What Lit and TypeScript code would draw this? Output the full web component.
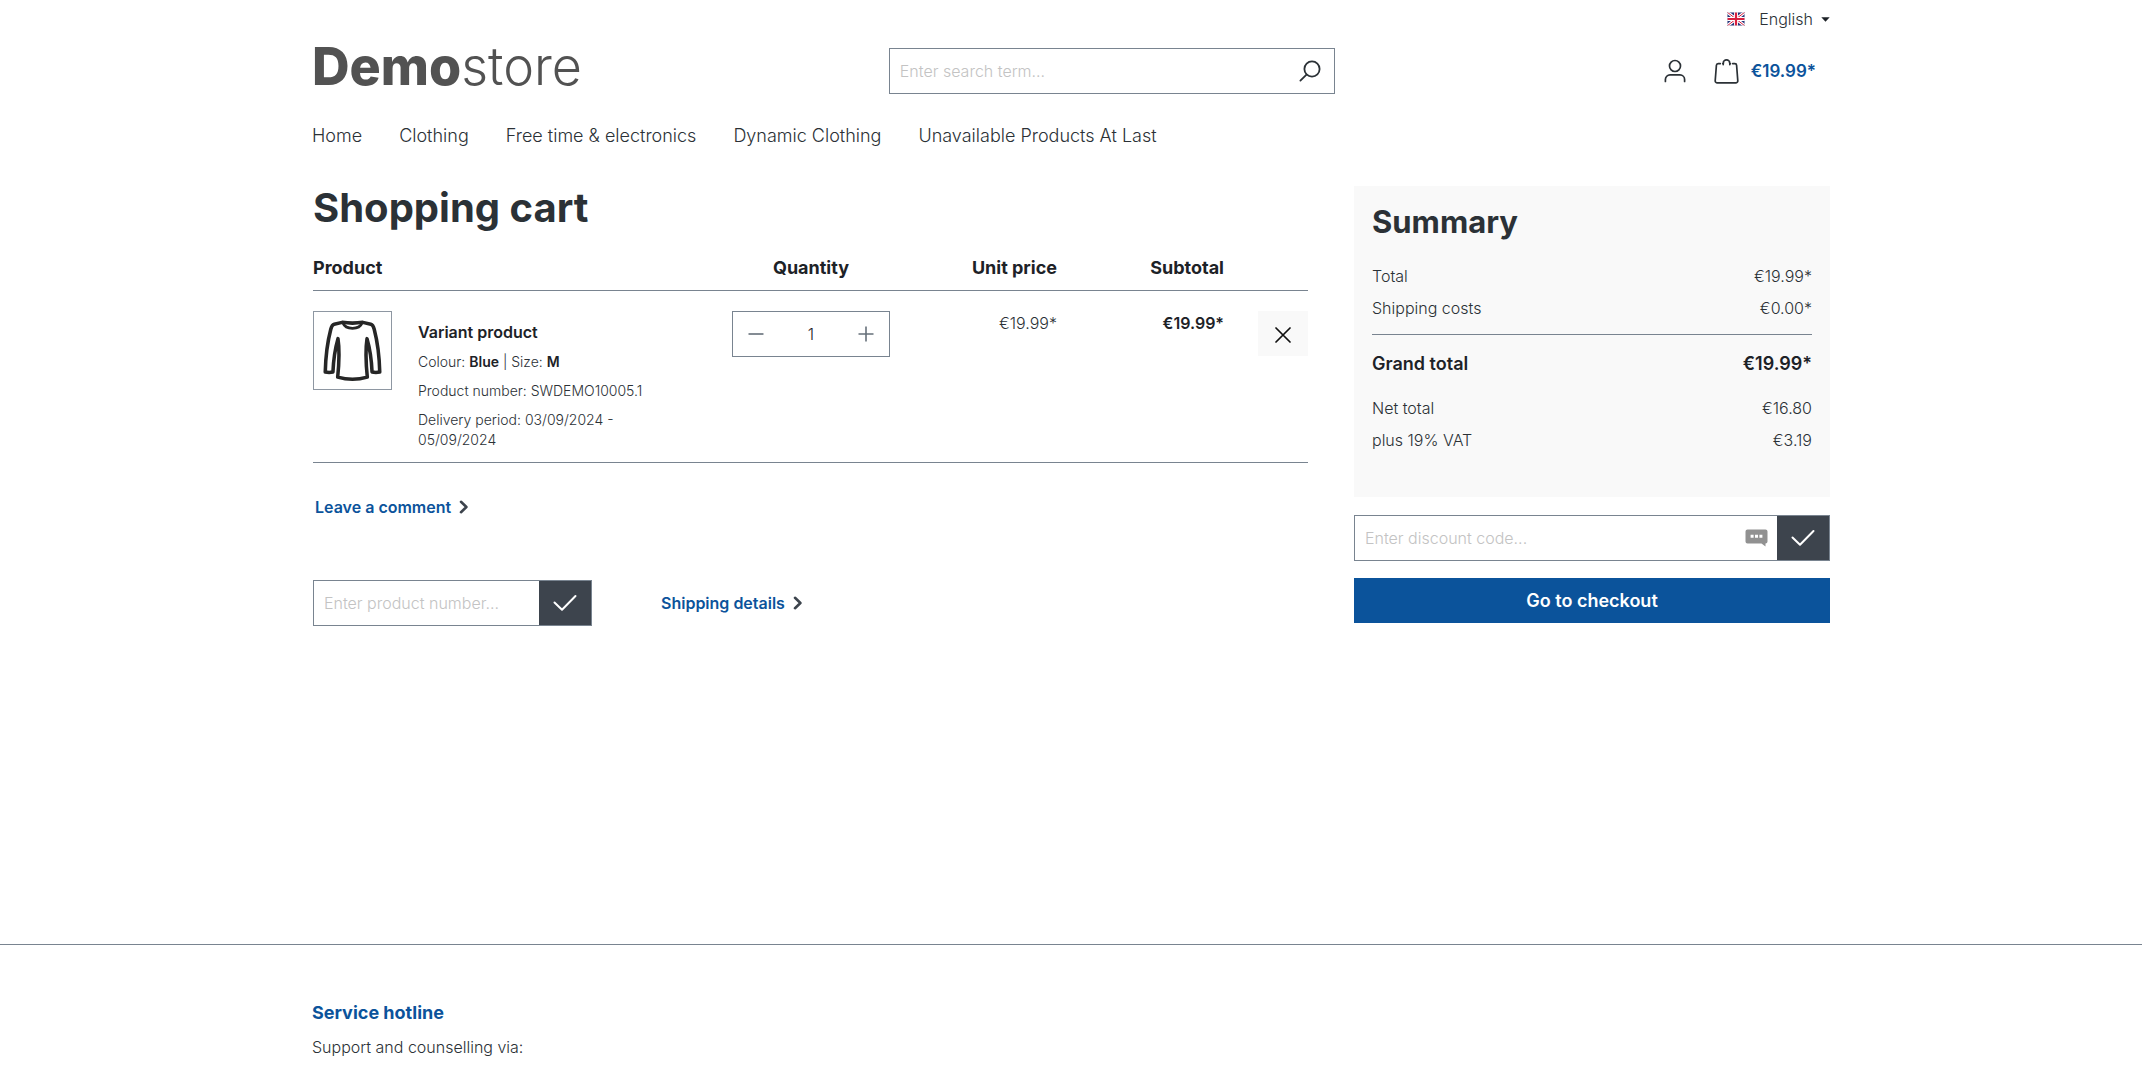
import { LitElement, html, css, svg } from "lit";
import { customElement, state } from "lit/decorators.js";

const checkIcon = svg`<svg class="icon" width="24" height="18" viewBox="0 0 24 18" aria-hidden="true"><path d="M1.5 8.5 9 15.8 22.5 2" fill="none" stroke="#fff" stroke-width="2" stroke-linecap="round" stroke-linejoin="round"/></svg>`;
const arrowIcon = svg`<svg class="icon" width="10" height="14" viewBox="0 0 10 14" aria-hidden="true"><path d="M2 1.8 7.4 7 2 12.2" fill="none" stroke="#3d444d" stroke-width="2.6" stroke-linecap="round" stroke-linejoin="round"/></svg>`;

interface Item {
  name: string;
  colour: string;
  size: string;
  number: string;
  delivery: string;
  price: string;
}

@customElement("app-root")
export class AppRoot extends LitElement {
  @state() private quantity = 1;

  private links = ["Home", "Clothing", "Free time & electronics", "Dynamic Clothing", "Unavailable Products At Last"];

  private items: Item[] = [
    {
      name: "Variant product",
      colour: "Blue",
      size: "M",
      number: "SWDEMO10005.1",
      delivery: "03/09/2024 - 05/09/2024",
      price: "€19.99*",
    },
  ];

  static styles = css`
    :host {
      display: block;
      min-height: 100vh;
      background: #fff;
      color: #2b3136;
      font-family: Inter, "Liberation Sans", sans-serif;
      font-size: 16px;
      font-weight: 300;
      line-height: 24px;
    }
    *, *::before, *::after { box-sizing: border-box; }
    h1, h2, h3, p, dl, dd { margin: 0; }
    a { color: inherit; text-decoration: none; }
    button, input {
      font: inherit;
      color: inherit;
      margin: 0;
      padding: 0;
      border: 0;
      border-radius: 0;
      background: none;
    }
    button { cursor: pointer; }
    .icon { display: block; flex: none; }
    .container {
      max-width: 1518px;
      margin: 0 auto;
    }
    .topbar {
      display: flex;
      justify-content: flex-end;
      padding-top: 7px;
    }
    .language {
      display: flex;
      align-items: center;
      gap: 8px;
    }
    .language .flag { margin-right: 6px; }
    .header {
      display: grid;
      grid-template-columns: 38% 446px 1fr;
      align-items: center;
      padding-top: 17px;
    }
    .logo {
      padding-bottom: 8px;
      font-size: 52px;
      line-height: 38px;
      font-weight: 300;
      color: #525252;
    }
    .logo b { font-weight: 800; }
    .field {
      display: flex;
      align-items: center;
      height: 46px;
      border: 1px solid #798490;
      background: #fff;
    }
    .field input {
      flex: 1;
      width: 0;
      min-width: 0;
      height: 100%;
      padding: 0 10px;
      outline-offset: -2px;
    }
    .field input::placeholder { color: #c3c3c3; opacity: 1; }
    .search-button { padding: 10px 13px; }
    .actions {
      display: flex;
      justify-content: flex-end;
      align-items: center;
      gap: 28px;
      padding-right: 14px;
    }
    .cart {
      display: flex;
      align-items: center;
      gap: 12px;
      font-size: 17px;
      font-weight: 600;
      color: #0b539b;
    }
    .nav {
      display: flex;
      gap: 37px;
      padding-top: 30px;
      font-size: 18px;
    }
    .main {
      display: grid;
      grid-template-columns: minmax(0, 1fr) 476px;
      gap: 46px;
      align-items: start;
      min-height: 796px;
      padding-top: 38px;
    }
    .items { padding-left: 1px; }
    h1 {
      font-size: 40px;
      line-height: 44px;
      font-weight: 700;
    }
    .table {
      width: 100%;
      table-layout: fixed;
      border-collapse: collapse;
      margin-top: 18px;
    }
    .table th, .table td {
      padding: 0;
      text-align: right;
      vertical-align: top;
      font-weight: 300;
      border-bottom: 1px solid #798490;
    }
    .table thead th {
      height: 42px;
      padding-top: 8px;
      font-size: 18px;
      font-weight: 700;
      color: #1d2227;
    }
    .table tbody td { padding-top: 20px; }
    .table .left { text-align: left; }
    .table .center { text-align: center; }
    .col-quantity { width: 158px; }
    .col-price { width: 167px; }
    .col-remove { width: 84px; }
    .product {
      display: flex;
      gap: 26px;
      padding-bottom: 12px;
    }
    .thumb {
      flex: none;
      width: 79px;
      height: 79px;
      border: 1px solid #8e97a2;
    }
    .details {
      max-width: 240px;
      padding-top: 9px;
      font-size: 14px;
      line-height: 20px;
    }
    .details p { margin-top: 9px; }
    .details .name {
      display: block;
      font-size: 16px;
      line-height: 24px;
      font-weight: 600;
      color: #1d2227;
    }
    .details .name + p { margin-top: 8px; }
    .details b, .strong { font-weight: 600; color: #1d2227; }
    .quantity {
      display: flex;
      align-items: center;
      height: 46px;
      border: 1px solid #798490;
    }
    .quantity button { padding: 13px 15px; }
    .quantity input {
      flex: 1;
      min-width: 0;
      text-align: center;
      color: #1d2227;
    }
    .remove {
      display: inline-flex;
      align-items: center;
      justify-content: center;
      width: 50px;
      height: 45px;
      padding-top: 4px;
      background: #f9f9f9;
    }
    .more {
      display: inline-flex;
      align-items: center;
      gap: 8px;
      font-weight: 600;
      color: #0b539b;
    }
    .comment { padding: 32px 0 61px 2px; display: flex; }
    .add-row {
      display: flex;
      align-items: center;
      gap: 69px;
    }
    .add-row .field { flex: 0 1 279px; }
    .confirm {
      display: flex;
      align-items: center;
      justify-content: center;
      width: 52px;
      align-self: stretch;
      background: #3d444d;
    }
    .chat { margin-right: 9px; }
    .summary {
      padding: 17px 18px 37px;
      background: #f9f9f9;
    }
    h2 {
      font-size: 31px;
      line-height: 38px;
      font-weight: 700;
    }
    dl { padding-top: 23px; }
    .line {
      display: flex;
      justify-content: space-between;
      line-height: 24px;
      padding-bottom: 8px;
    }
    .line.grand {
      margin-top: 6px;
      padding: 17px 0 20px;
      border-top: 1px solid #798490;
      font-size: 18px;
      font-weight: 600;
      color: #1d2227;
    }
    .discount { margin-top: 18px; }
    .checkout {
      width: 100%;
      height: 45px;
      margin-top: 17px;
      background: #0b539b;
      color: #fff;
      font-size: 18px;
      font-weight: 600;
    }
    .footer {
      border-top: 1px solid #798490;
      padding: 56px 0 21px;
    }
    h3 {
      font-size: 18px;
      line-height: 24px;
      font-weight: 700;
      color: #0b539b;
      padding-bottom: 10px;
    }
  `;

  private change(step: number) {
    this.quantity = Math.max(1, this.quantity + step);
  }

  private renderHeader() {
    return html`
      <div class="container topbar">
        <button class="language" type="button">
          <svg class="icon flag" width="18" height="14" viewBox="0 0 18 14" aria-hidden="true">
            <rect width="18" height="14" fill="#26357a" />
            <path d="M0 0 18 14M18 0 0 14" stroke="#fff" stroke-width="3" />
            <path d="M0 0 18 14M18 0 0 14" stroke="#d8203f" stroke-width="1" />
            <path d="M9 0v14M0 7h18" stroke="#fff" stroke-width="4" />
            <path d="M9 0v14M0 7h18" stroke="#d8203f" stroke-width="2.2" />
            <rect x=".5" y=".5" width="17" height="13" fill="none" stroke="#cfd3df" stroke-opacity=".6" />
          </svg>
          <span>English</span>
          <svg class="icon" width="9" height="5" viewBox="0 0 9 5" aria-hidden="true"><path d="M.3.3h8.4L4.5 4.7z" fill="#1d2227" /></svg>
        </button>
      </div>
      <header class="container header">
        <a class="logo" href="#"><b>Demo</b>store</a>
        <form class="field" @submit=${(e: Event) => e.preventDefault()}>
          <input type="text" aria-label="Search" placeholder="Enter search term..." />
          <button class="search-button" type="submit" aria-label="Search">
            <svg class="icon" width="22" height="22" viewBox="0 0 22 22" aria-hidden="true">
              <g fill="none" stroke="#2b3136" stroke-width="1.8" stroke-linecap="round">
                <circle cx="13" cy="9" r="7.6" />
                <path d="M7.5 14.6 1.4 20.6" />
              </g>
            </svg>
          </button>
        </form>
        <div class="actions">
          <a href="#" aria-label="Your account">
            <svg class="icon" width="22" height="24" viewBox="0 0 22 24" aria-hidden="true">
              <g fill="none" stroke="#2b3136" stroke-width="1.7" stroke-linecap="round">
                <circle cx="11" cy="7" r="5.5" />
                <path d="M1.4 22.4v-1.9a4.6 4.6 0 0 1 4.6-4.6h10a4.6 4.6 0 0 1 4.6 4.6v1.9" />
              </g>
            </svg>
          </a>
          <a class="cart" href="#">
            <svg class="icon" width="25" height="25" viewBox="0 0 25 25" aria-hidden="true">
              <g fill="none" stroke="#2b3136" stroke-width="1.7" stroke-linecap="round" stroke-linejoin="round">
                <path d="M6.3 4.6H4.2A1.8 1.8 0 0 0 2.4 6.3L1.2 21.8a2 2 0 0 0 2 2.1h18.6a2 2 0 0 0 2-2.1L22.6 6.3a1.8 1.8 0 0 0-1.8-1.7h-2.1" />
                <path d="M9.2 5.6V4.2a3.3 3.3 0 0 1 6.6 0v1.4M9.4 4.6h-.6M15.8 4.6h.6" />
              </g>
            </svg>
            <span>€19.99*</span>
          </a>
        </div>
      </header>
      <nav class="container nav">${this.links.map((l) => html`<a href="#">${l}</a>`)}</nav>
    `;
  }

  private renderItem(item: Item) {
    return html`
      <tr>
        <td class="left">
          <div class="product">
            <a class="thumb" href="#" aria-label=${item.name}>
              <svg class="icon" width="77" height="77" viewBox="0 0 78 78" aria-hidden="true">
                <g fill="none" stroke="#262626" stroke-width="3.6" stroke-linejoin="round" stroke-linecap="round">
                  <path d="M28.5 10.5 20.5 12.3C18.4 12.9 17.6 15 17 17.5C14 29 11.8 44 11.4 60.8C14 61.4 16.6 61.4 19.2 60.8C19.7 48 21.4 37 24.3 27C26 38 25.6 50 24 66C33.5 68.8 44.5 68.8 54 66C52.4 50 52 38 53.7 27C56.6 37 58.3 48 58.8 60.8C61.4 61.4 64 61.4 66.6 60.8C66.2 44 64 29 61 17.5C60.4 15 59.6 12.9 57.5 12.3L49.5 10.5C43.5 11.4 34.5 11.4 28.5 10.5Z" />
                  <path d="M29.5 11.5C32 18.2 46 18.2 48.5 11.5" stroke-width="2.8" />
                </g>
              </svg>
            </a>
            <div class="details">
              <a class="name" href="#">${item.name}</a>
              <p>Colour: <b>${item.colour}</b> | Size: <b>${item.size}</b></p>
              <p>${`Product number: ${item.number}`}</p>
              <p>${`Delivery period: ${item.delivery}`}</p>
            </div>
          </div>
        </td>
        <td>
          <div class="quantity">
            <button type="button" aria-label="Decrease quantity" @click=${() => this.change(-1)}>
              <svg class="icon" width="16" height="18" viewBox="0 0 16 18" aria-hidden="true"><path d="M.5 9h15" stroke="#66707a" stroke-width="1.6" /></svg>
            </button>
            <input type="text" inputmode="numeric" aria-label="Quantity" .value=${String(this.quantity)} />
            <button type="button" aria-label="Increase quantity" @click=${() => this.change(1)}>
              <svg class="icon" width="16" height="18" viewBox="0 0 16 18" aria-hidden="true"><path d="M.5 9h15M8 1.5v15" stroke="#66707a" stroke-width="1.6" /></svg>
            </button>
          </div>
        </td>
        <td>${item.price}</td>
        <td><span class="strong">${item.price}</span></td>
        <td>
          <button class="remove" type="button" aria-label="Remove product">
            <svg class="icon" width="16" height="16" viewBox="0 0 16 16" aria-hidden="true"><path d="M1 1 15 15M15 1 1 15" stroke="#111" stroke-width="1.7" stroke-linecap="round" /></svg>
          </button>
        </td>
      </tr>
    `;
  }

  private renderLine(label: string, value: string, grand = false) {
    return html`<div class=${grand ? "line grand" : "line"}><dt>${label}</dt><dd>${value}</dd></div>`;
  }

  render() {
    return html`
      ${this.renderHeader()}
      <main class="container main">
        <section class="items">
          <h1>Shopping cart</h1>
          <table class="table">
            <colgroup>
              <col />
              <col class="col-quantity" />
              <col class="col-price" />
              <col class="col-price" />
              <col class="col-remove" />
            </colgroup>
            <thead>
              <tr>
                <th class="left" scope="col">Product</th>
                <th class="center" scope="col">Quantity</th>
                <th scope="col">Unit price</th>
                <th scope="col">Subtotal</th>
                <th></th>
              </tr>
            </thead>
            <tbody>
              ${this.items.map((i) => this.renderItem(i))}
            </tbody>
          </table>
          <div class="comment"><a class="more" href="#">Leave a comment ${arrowIcon}</a></div>
          <div class="add-row">
            <form class="field" @submit=${(e: Event) => e.preventDefault()}>
              <input type="text" aria-label="Product number" placeholder="Enter product number..." />
              <button class="confirm" type="submit" aria-label="Add product">${checkIcon}</button>
            </form>
            <a class="more" href="#">Shipping details ${arrowIcon}</a>
          </div>
        </section>
        <aside>
          <div class="summary">
            <h2>Summary</h2>
            <dl>
              ${this.renderLine("Total", "€19.99*")}
              ${this.renderLine("Shipping costs", "€0.00*")}
              ${this.renderLine("Grand total", "€19.99*", true)}
              ${this.renderLine("Net total", "€16.80")}
              ${this.renderLine("plus 19% VAT", "€3.19")}
            </dl>
          </div>
          <form class="field discount" @submit=${(e: Event) => e.preventDefault()}>
            <input type="text" aria-label="Discount code" placeholder="Enter discount code..." />
            <svg class="icon chat" width="23" height="18" viewBox="0 0 23 18" aria-hidden="true">
              <path d="M2.5.5h18a2 2 0 0 1 2 2v10a2 2 0 0 1-2 2v3l-4-3h-14a2 2 0 0 1-2-2v-10a2 2 0 0 1 2-2z" fill="#919191" />
              <path d="M5.6 5.7h3v3h-3zM10 5.7h3v3h-3zM14.4 5.7h3v3h-3z" fill="#fff" />
            </svg>
            <button class="confirm" type="submit" aria-label="Redeem code">${checkIcon}</button>
          </form>
          <button class="checkout" type="button">Go to checkout</button>
        </aside>
      </main>
      <footer class="footer">
        <div class="container">
          <h3>Service hotline</h3>
          <p>Support and counselling via:</p>
        </div>
      </footer>
    `;
  }
}
